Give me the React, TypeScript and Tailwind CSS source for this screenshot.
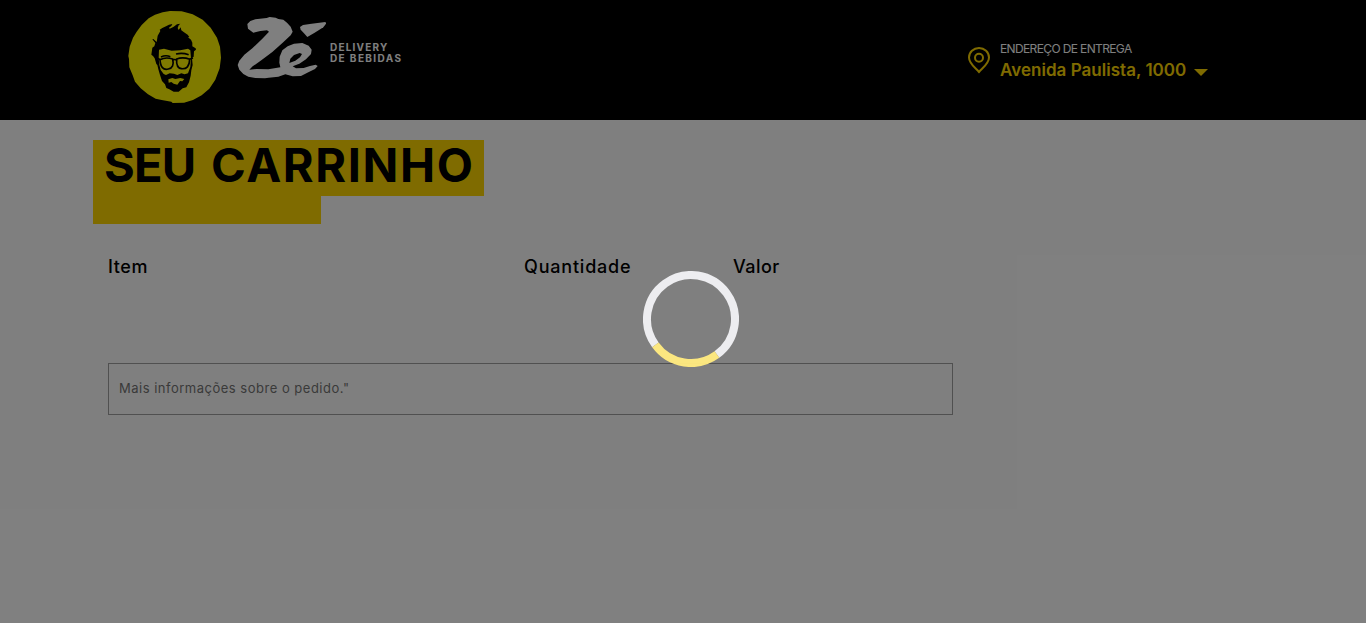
function FaceLogo() {
  return (
    <svg className="h-[105px] w-[110px] shrink-0" viewBox="0 0 330 315" aria-hidden="true">
      <path
        fill="#fff500"
        d="M150 18L185 19L218 28L248 44L272 68L291 98L300 125L303 158L299 190L286 224L268 251L245 271L219 285L192 293L158 294L154 290L125 285L107 281L84 268L62 250L45 230L38 211L28 187L27 162L25 153L29 125L39 98L50 80L65 60L86 40L105 29L128 22Z"
      />
      <path
        fill="#000"
        d="M106 114L97 103L100 102L110 111L113 92L121 78L119 74L127 69L138 64L147 59L157 57L154 63L147 68L149 71L160 66L171 58L181 56L176 61L173 69L176 75L182 67L184 76L191 81L203 89L208 96L204 97L213 104L217 113L217 124L227 130L228 134L222 139L221 155L216 159L218 180L214 196L212 212L207 232L199 247L188 250L176 260L161 260L148 253L139 249L135 238L126 228L120 210L115 193L112 180L109 177L104 160L99 153L94 149L97 128L103 124Z"
      />
      <path
        fill="#fff500"
        d="M117 134L132 131L155 137L181 136L204 131L211 136L213 160L211 186L204 205L194 208L184 205L172 210L162 206L149 205L138 210L131 207L122 195L118 179L116 160Z"
      />
      <path fill="#fff500" d="M145 223L157 219L166 222L181 219L193 222L187 229L180 228L172 239L161 236L154 231L146 233Z" />
      <g fill="none" stroke="#000" strokeWidth="5">
        <path d="M120 164Q137 155 158 162Q164 188 145 192Q122 198 120 164Z" />
        <path d="M170 162Q189 155 209 163Q208 194 184 191Q168 189 170 162Z" />
        <path d="M157 166Q164 161 171 166M112 160L122 164M208 163L219 159M123 156Q137 149 151 155M168 147Q187 142 206 149" />
      </g>
    </svg>
  );
}

function ZeLogo() {
  return (
    <svg className="h-[90px] w-[96px] shrink-0" viewBox="0 0 288 270" aria-hidden="true">
      <path
        fill="#fff"
        fillRule="evenodd"
        d="M52 57L61 48L76 43L110 39L119 36L137 38L145 42L160 44L171 53L182 65L188 80L182 91L158 113L127 141L96 164L68 184L58 194L80 192L115 193L151 187L148 173L149 155L157 136L173 124L192 116L217 114L236 122L245 134L243 147L228 163L208 176L188 184L198 190L221 189L240 183L257 179L263 183L255 192L235 202L213 213L188 214L166 208L145 215L116 218L105 220L76 219L55 215L40 207L28 194L23 180L28 167L43 149L67 130L97 101L117 80L111 76L91 78L70 83L54 71ZM178 174L181 161L192 150L209 144L216 147L210 157L196 167Z"
      />
      <path fill="#fff" d="M210 66L219 60L245 56L286 51L289 55L280 67L254 83L232 96L222 85L212 74Z" />
    </svg>
  );
}

export default function App() {
  return (
    <div className="relative h-[623px] overflow-hidden bg-white font-['Inter',sans-serif] text-black">
      <header className="flex h-[120px] items-start bg-black pl-[120px] pt-[5px]">
        <FaceLogo />
        <ZeLogo />
        <div className="ml-1 mt-[37px] text-[10px] font-bold leading-[11px] text-white">
          <p className="tracking-[1.2px]">DELIVERY</p>
          <p className="tracking-[1.4px]">DE BEBIDAS</p>
        </div>
        <div className="ml-auto mr-[158px] mt-[35px] flex">
          <svg className="mr-[9px] mt-[6px] h-[28px] w-[24px]" viewBox="0 0 24 28" fill="none" stroke="#ffd600" strokeWidth="2">
            <path d="M12 26C8 21.5 2 17.5 2 11.5a10 9.5 0 0 1 20 0C22 17.5 16 21.5 12 26Z" />
            <circle cx="12" cy="11.8" r="4" />
          </svg>
          <div className="w-[208px]">
            <p className="text-[12px] leading-[18px] tracking-[-0.63px] text-white">ENDEREÇO DE ENTREGA</p>
            <p className="flex items-center whitespace-nowrap text-[17px] font-semibold leading-[25px] text-[#ffd600]">
              <span className="w-[186px] tracking-[0.03px]">Avenida Paulista, 1000</span>
              <svg className="ml-2 mt-1 h-[7px] w-[14px] shrink-0" viewBox="0 0 14 7">
                <path fill="#ffd600" d="M0 0H14L7 7Z" />
              </svg>
            </p>
          </div>
        </div>
      </header>
      <main className="pl-[93px] pt-5">
        <h1 className="h-14 w-[391px] whitespace-nowrap bg-[#ffd600] pl-[11px] text-[47px] font-bold leading-[50px] tracking-[1.6px]">
          <span className="mr-[3px] tracking-[-0.8px]">SEU</span> CARRINHO
        </h1>
        <div className="h-7 w-[228px] bg-[#ffd600]" />
        <div className="ml-[15px] mt-[29px] flex text-[18px] font-medium leading-7">
          <div className="w-[416px] tracking-[0.6px]">Item</div>
          <div className="w-[209px] tracking-[0.8px]">Quantidade</div>
          <div className="tracking-[0.45px]">Valor</div>
        </div>
        <div className="ml-[15px] mt-[82px] flex h-[52px] w-[845px] items-center border border-[#a0a0a0] pl-[10px] text-[13px] tracking-[0.5px] text-[#757575]">
          Mais informações sobre o pedido."
        </div>
      </main>
      <div className="absolute inset-0 flex items-center justify-center bg-black/50 pl-4 pt-[15px]">
        <svg className="size-24" viewBox="0 0 96 96" fill="none" strokeWidth="8">
          <path d="M12.4 73.9A44 44 0 1 1 73.9 83.6" stroke="#ededf0" />
          <path d="M73.9 83.6A44 44 0 0 1 12.4 73.9" stroke="#ffea80" strokeOpacity="0.97" />
        </svg>
      </div>
    </div>
  );
}
